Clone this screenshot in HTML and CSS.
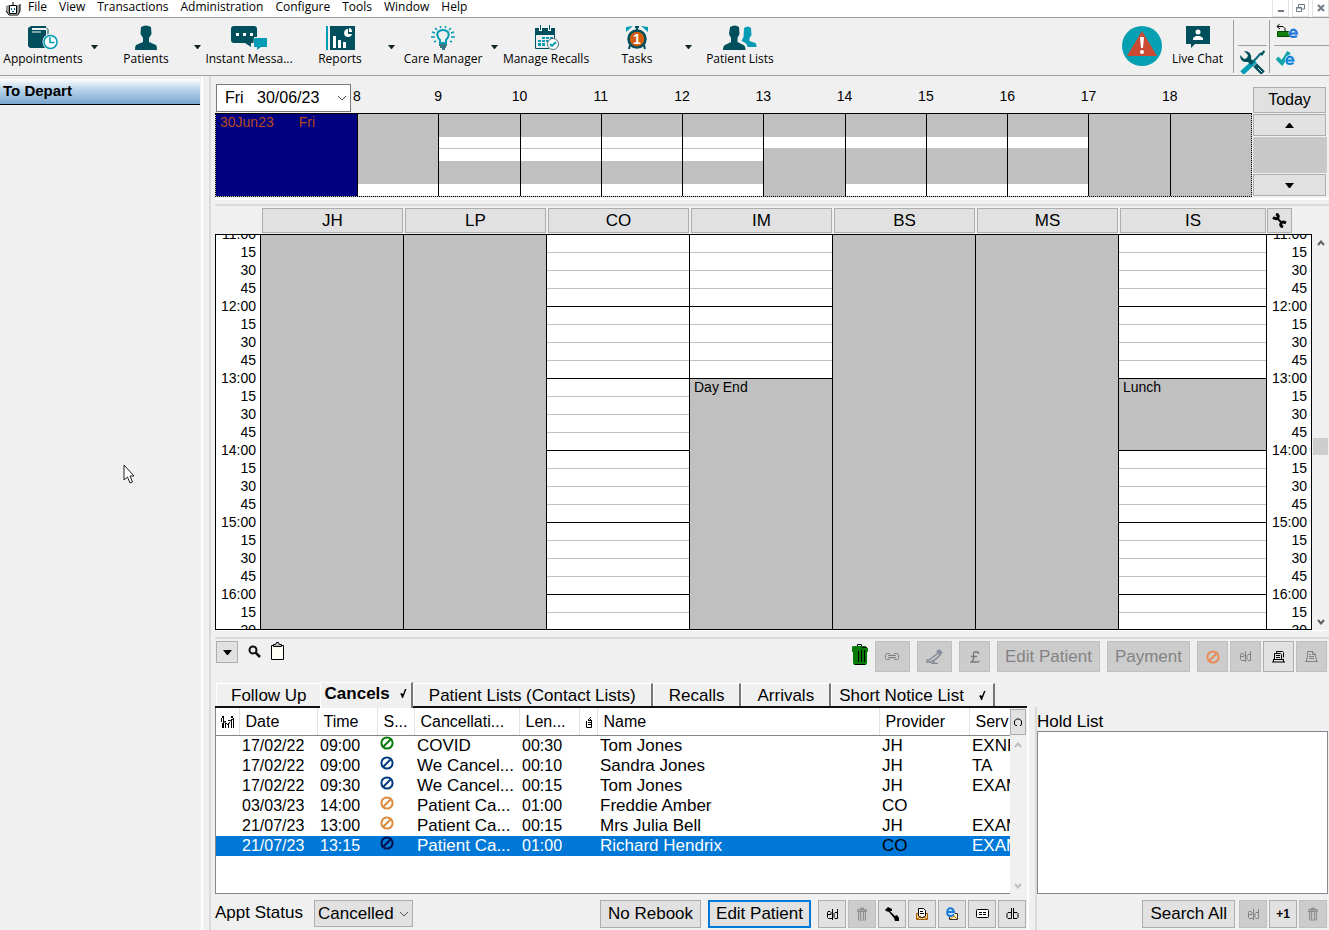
FILE: index.html
```html
<!DOCTYPE html>
<html lang="en">
<head>
    <meta charset="UTF-8">
    <meta name="viewport" content="width=device-width, initial-scale=1.0">
    <title>Appointments</title>
    <link rel="stylesheet" href="styles.css">
</head>
<body>
    <!-- shared icons -->
    <svg class="defs" aria-hidden="true">
        <symbol id="arrow-down" viewBox="0 0 9 5"><path d="M0 0h9L5 5H4z"/></symbol>
        <symbol id="arrow-up" viewBox="0 0 9 5"><path d="M0 5h9L5 0H4z"/></symbol>
        <symbol id="ban" viewBox="0 0 14 14"><g fill="none" stroke="currentColor" stroke-width="2"><circle cx="7" cy="7" r="5.6"/><path d="M3.5 10.5l7-7"/></g></symbol>
        <symbol id="chev-up" viewBox="0 0 8 6"><path d="M1 5l3-3.500 3 3.500" fill="none" stroke="currentColor" stroke-width="2"/></symbol>
        <symbol id="chev-down" viewBox="0 0 8 6"><path d="M1 1l3 3.500 3-3.500" fill="none" stroke="currentColor" stroke-width="2"/></symbol>
        <symbol id="ed" viewBox="0 0 13 13"><path d="M1 6.500h4v-2l-1-1H2l-.500 1v5l1 1H6M6.500 1v11M11.500 1v9.500H9l-1-1v-4l1-1h2.500" fill="none" stroke="currentColor"/></symbol>
        <symbol id="bin" viewBox="0 0 12 14"><path d="M1 3h10v1.500H1zM4 1h4v2H4z" fill="#a8a8a8"/><path d="M2 4h8v9H2z" fill="#c4c4c4"/><path d="M1 4.500h10M2.500 5v8h7V5M4.500 5v7M7.500 5v7M1.500 2.500h9M4.500 2V1h3v1" fill="none" stroke="#8d8d8d"/></symbol>
        <symbol id="print" viewBox="0 0 15 14"><path d="M3.500 8.500v-7h5l3 3v4M8.500 1.500v3h3M5 4.500h2M5 6.500h5M5 8.500h5M3 8.500H2.500v3M12 8.500h.500v3M1 11.500h13" fill="none" stroke="currentColor"/></symbol>
        <symbol id="print-stack" viewBox="0 0 15 14"><path d="M5.500 3V1.500h6l1 1v5M3.500 9V3.500h6l1 1V9M5 5.500h4M5 7.500h4M2 9.500h11M1 12h13M12.500 9v3M2.500 9v3" fill="none" stroke="currentColor"/></symbol>
        <symbol id="tick" viewBox="0 0 8 11"><path d="M7.500 1H6L4 6 2.500 5 1 6l1 1 1 3h1z"/></symbol>
    </svg>

    <header>
        <nav class="menubar">
            <svg class="app-icon" width="16" height="14" viewBox="0 0 16 14"><path d="M1 4l3-1v9l-3-2zM12 3h3v7l-3 2z" fill="#999"/><path d="M1 9l3 4h9l2-4V2M8 0v3" fill="none" stroke="#000"/><path d="M4.500 3.500h7v8h-7z" fill="#fff" stroke="#000"/><path d="M6 6h1v2H6zM9 6h1v2H9zM7 9h2v1H7z" fill="#069"/></svg>
            <a href="#">File</a>
            <a href="#">View</a>
            <a href="#">Transactions</a>
            <a href="#">Administration</a>
            <a href="#">Configure</a>
            <a href="#">Tools</a>
            <a href="#">Window</a>
            <a href="#">Help</a>
            <div class="window-buttons">
                <button aria-label="Minimise"><svg width="8" height="8"><path d="M1 6h6v2H1z" fill="#6e7b87"/></svg></button>
                <button aria-label="Restore"><svg width="9" height="9"><path d="M2.500 3V.5h6V5H6M0 4h6M.5 3.500h5v4h-5z" fill="none" stroke="#6e7b87"/></svg></button>
                <button aria-label="Close"><svg width="8" height="8"><path d="M1 1l6 6M7 1L1 7" stroke="#6e7b87" stroke-width="2"/></svg></button>
            </div>
        </nav>

        <div class="toolbar">
            <button class="tool">
                <svg width="30" height="25" viewBox="0 0 30 25"><path d="M3 1h15v2H4v2h14v18H2L0 21V3z" fill="#004f5c"/><path d="M4 2.500h14l2 2V12" fill="none" stroke="#004f5c"/><path d="M4 7h9" stroke="#fff"/><circle cx="22.500" cy="17" r="8" fill="#f0f0f0"/><circle cx="22.500" cy="17" r="6.500" fill="#fff" stroke="#039cb4" stroke-width="1.500"/><path d="M22 12v5.500h4.500" fill="none" stroke="#039cb4" stroke-width="1.500"/></svg>
                Appointments
            </button>
            <button class="drop" aria-label="Appointments menu"><svg width="7" height="4"><use href="#arrow-down"/></svg></button>
            <button class="tool">
                <svg width="24" height="25" viewBox="0 0 24 25"><path d="M7 2q5-3 10 0l.500 7-2.500 4v4l7 3q1 1 1 5H1q0-4 1-5l7-3v-4L6.500 9z" fill="#004f5c"/></svg>
                Patients
            </button>
            <button class="drop" aria-label="Patients menu"><svg width="7" height="4"><use href="#arrow-down"/></svg></button>
            <button class="tool spaced">
                <svg width="37" height="25" viewBox="0 0 37 25"><path d="M3 1h20q3 0 3 3v11q0 3-3 3h-3v4l-6-4H3q-3 0-3-3V4q0-3 3-3z" fill="#004f5c"/><path d="M5 8h3v3H5zM12 8h3v3h-3zM19 8h3v3h-3z" fill="#fff"/><path d="M23 12h13v11H22z" fill="#f0f0f0"/><path d="M24 13h12v9h-6l-4 3v-3h-3v-8z" fill="#039cb4"/></svg>
                Instant Messa...
            </button>
            <button class="tool">
                <svg width="29" height="25" viewBox="0 0 29 25"><path d="M0 1h2v24H0z" fill="#039cb4"/><path d="M4 1h25v24H4z" fill="#004f5c"/><path d="M7 11h3v12H7zM12 15h3v8h-3zM17 17h3v6h-3zM22 4a4 4 0 1 0 4 5h-4z" fill="#fff"/><path d="M23 3q3 0 3 4h-3z" fill="#fff"/></svg>
                Reports
            </button>
            <button class="drop" aria-label="Reports menu"><svg width="7" height="4"><use href="#arrow-down"/></svg></button>
            <button class="tool">
                <svg width="24" height="25" viewBox="0 0 24 25"><path d="M9 18v-3q-4-4-2-8 2-2 5-2t5 2q2 4-2 8v3z" fill="none" stroke="#039cb4" stroke-width="2"/><path d="M8 20h8M9 22h6M11 24h3" stroke="#004f5c" stroke-width="1.500"/><path d="M9 1l1 2M15 1l-1 2M4 3l2 2M20 3l-2 2M1 7l3 1M23 7l-3 1M0 12h4M24 12h-4M3 17l2-1M21 17l-2-1" stroke="#039cb4" stroke-width="1.500"/></svg>
                Care Manager
            </button>
            <button class="drop" aria-label="Care Manager menu"><svg width="7" height="4"><use href="#arrow-down"/></svg></button>
            <button class="tool spaced">
                <svg width="25" height="25" viewBox="0 0 25 25"><path d="M1 3h20v7H1z" fill="#004f5c"/><path d="M1.500 9v14.500H15M20.500 9v5" fill="none" stroke="#004f5c"/><path d="M5 1h3v5H5zM14 1h3v5h-3z" fill="#fff"/><path d="M6 0h1v5H6zM15 0h1v5h-1z" fill="#004f5c"/><path d="M8 12h3v2H8zM12 12h3v2h-3zM16 12h3v2h-3zM4 15h3v2H4zM8 15h3v2H8zM12 15h3v2h-3zM4 18h3v3H4zM8 18h3v3H8z" fill="#039cb4"/><circle cx="19" cy="19" r="5.500" fill="#fff" stroke="#53717a"/><path d="M16 19l2 2 4-4" fill="none" stroke="#039cb4" stroke-width="1.800"/></svg>
                Manage Recalls
            </button>
            <button class="tool">
                <svg width="24" height="25" viewBox="0 0 24 25"><path d="M1 7V2l7-1zM23 7V2l-7-1z" fill="#039cb4"/><path d="M5 20l-1 4M19 20l1 4M12 2v3M10 2h4" stroke="#004f5c" stroke-width="2"/><circle cx="12" cy="14" r="8.500" fill="#d25c0b" stroke="#004f5c" stroke-width="2.500"/><text class="badge-num" x="8" y="19">1</text></svg>
                Tasks
            </button>
            <button class="drop" aria-label="Tasks menu"><svg width="7" height="4"><use href="#arrow-down"/></svg></button>
            <button class="tool">
                <svg width="34" height="25" viewBox="0 0 34 25"><path d="M21 3q4-3 7 0l.500 7-2 3v3l6 2q1 1 1 4h-9q0-4-6-6l2-4z" fill="#039cb4"/><path d="M7 2q5-3 9 0l.500 7-2 4v4l6 3q2 1 2 5H0q0-4 2-5l6-3v-4L6 9z" fill="#004f5c"/></svg>
                Patient Lists
            </button>

            <div class="toolbar-right">
                <button class="alert" aria-label="Alerts">
                    <svg width="40" height="40" viewBox="0 0 40 40"><circle cx="20" cy="20" r="20" fill="#079fb2"/><path d="M20 5l15 25H5z" fill="#cc4a34"/><path d="M18 11h4l-1 11h-2z" fill="#fff"/><circle cx="20" cy="26" r="2" fill="#fff"/></svg>
                </button>
                <button class="tool chat">
                    <svg width="24" height="25" viewBox="0 0 24 25"><path d="M0 1h24v18H9l-4 4v-4H0z" fill="#004f5c"/><circle cx="12" cy="7" r="2.500" fill="#fff"/><path d="M7 15v-2l3-2h4l3 2v2z" fill="#fff"/></svg>
                    Live Chat
                </button>
                <div class="quick tools-col">
                    <span></span>
                    <button aria-label="Tools"><svg width="25" height="24" viewBox="0 0 25 24"><path d="M2 23L15 11" stroke="#039cb4" stroke-width="5"/><path d="M4 1l4 4-1 3-3 1-4-4q0 8 8 7l3 3 3-3-3-3Q12 1 4 1z" fill="#004f5c"/><path d="M13 12l8-9" stroke="#0a6c7b" stroke-width="2"/><path d="M20 4l4-4 1 2-3 4z" fill="#004f5c"/><path d="M15 15l8 8" stroke="#004f5c" stroke-width="5"/><path d="M18 18l4 4" stroke="#d5e5e8" stroke-width="1"/></svg></button>
                </div>
                <div class="quick links-col">
                    <button aria-label="Send"><svg width="23" height="15" viewBox="0 0 23 15"><path d="M3.500 0L1 2.500l3 2.500M1 2.500h6l2 2V7" fill="none" stroke="#000"/><path d="M1.500 7.500h12v5h-12z" fill="#13800f" stroke="#034b00"/><circle cx="17.500" cy="9" r="5" fill="#cfe6fb"/><path d="M21 12q-4 2-6.500 0-1.500-4 1.500-6 4-1 5 3.500h-6" fill="none" stroke="#2474cf" stroke-width="2"/></svg></button>
                    <button aria-label="Confirm"><svg width="20" height="15" viewBox="0 0 20 15"><path d="M1 7l5 5 7-11" fill="none" stroke="#12a6a6" stroke-width="4"/><circle cx="14" cy="9" r="5" fill="#cfe6fb"/><path d="M17.500 12q-4 2-6.500 0-1.500-4 1.500-6 4-1 5 3.500h-6" fill="none" stroke="#0e82d6" stroke-width="2"/></svg></button>
                </div>
            </div>
        </div>
    </header>

    <div class="workspace">
        <aside>
            <h2>To Depart</h2>
            <svg class="pointer" width="12" height="20" viewBox="0 0 12 20"><path d="M1 1v15l3.500-3 2.500 6 2.500-1L7 12h4z" fill="#fff" stroke="#222"/></svg>
        </aside>

        <main>
            <!-- day overview -->
            <section class="overview">
                <div class="overview-head">
                    <select class="date" aria-label="Date"><option>Fri&nbsp;&nbsp; 30/06/23</option></select>
                    <div class="hours">
                        <span>8</span><span>9</span><span>10</span><span>11</span><span>12</span><span>13</span><span>14</span><span>15</span><span>16</span><span>17</span><span>18</span>
                    </div>
                </div>
                <button class="today">Today</button>
                <div class="strip">
                    <div class="strip-day"><span>30Jun23</span><span>Fri</span></div>
                    <div class="strip-grid">
                        <i class="open co"></i>
                        <i class="open im"></i>
                        <i class="open is-am"></i>
                        <i class="open is-pm"></i>
                        <div class="hour-lines"><i></i><i></i><i></i><i></i><i></i><i></i><i></i><i></i><i></i><i></i><i></i></div>
                    </div>
                </div>
                <div class="day-scroll">
                    <button aria-label="Previous day"><svg width="9" height="5"><use href="#arrow-up"/></svg></button>
                    <span></span>
                    <button aria-label="Next day"><svg width="9" height="5"><use href="#arrow-down"/></svg></button>
                </div>
            </section>

            <!-- appointment book -->
            <section class="book">
                <div class="providers">
                    <div class="provider-grid">
                        <button>JH</button>
                        <button>LP</button>
                        <button>CO</button>
                        <button>IM</button>
                        <button>BS</button>
                        <button>MS</button>
                        <button>IS</button>
                    </div>
                    <button class="settings" aria-label="Settings"><svg width="15" height="15" viewBox="0 0 15 15"><g fill="none" stroke="#000"><path d="M4 1q3 1 2 3.500T1 4.500M11 14q-3-1-2-3.500t5-.500" stroke-width="3"/><path d="M5 5l5 5" stroke-width="2"/></g></svg></button>
                </div>
                <div class="book-body">
                    <div class="book-frame">
                        <ul class="times">
                            <li>11:00</li><li>15</li><li>30</li><li>45</li>
                            <li>12:00</li><li>15</li><li>30</li><li>45</li>
                            <li>13:00</li><li>15</li><li>30</li><li>45</li>
                            <li>14:00</li><li>15</li><li>30</li><li>45</li>
                            <li>15:00</li><li>15</li><li>30</li><li>45</li>
                            <li>16:00</li><li>15</li><li>30</li>
                        </ul>
                        <div class="columns">
                            <div class="col closed"></div>
                            <div class="col closed"></div>
                            <div class="col"></div>
                            <div class="col"><div class="block day-end">Day End</div></div>
                            <div class="col closed"></div>
                            <div class="col closed"></div>
                            <div class="col"><div class="block lunch">Lunch</div></div>
                        </div>
                        <ul class="times">
                            <li>11:00</li><li>15</li><li>30</li><li>45</li>
                            <li>12:00</li><li>15</li><li>30</li><li>45</li>
                            <li>13:00</li><li>15</li><li>30</li><li>45</li>
                            <li>14:00</li><li>15</li><li>30</li><li>45</li>
                            <li>15:00</li><li>15</li><li>30</li><li>45</li>
                            <li>16:00</li><li>15</li><li>30</li>
                        </ul>
                    </div>
                    <div class="scrollbar">
                        <svg width="8" height="6"><use href="#chev-up"/></svg>
                        <i class="thumb"></i>
                        <svg width="8" height="6"><use href="#chev-down"/></svg>
                    </div>
                </div>
            </section>

            <!-- actions -->
            <section class="actions">
                <button class="btn small" aria-label="Options"><svg width="9" height="5"><use href="#arrow-down"/></svg></button>
                <button class="plain" aria-label="Search"><svg width="13" height="13" viewBox="0 0 13 13"><circle cx="5" cy="5" r="3.500" fill="none" stroke="#111" stroke-width="2"/><path d="M7.500 7.500L12 12" stroke="#111" stroke-width="2.500"/></svg></button>
                <button class="plain" aria-label="Clipboard"><svg width="13" height="18" viewBox="0 0 13 18"><path d="M.5 3.500h12v14H.5z" fill="#fffef2" stroke="#000"/><path d="M2.500 4.500v-2h2l1-2h2l1 2h2v2z" fill="#bbb" stroke="#000"/></svg></button>
                <div class="actions-right">
                    <button class="plain" aria-label="Bin"><svg width="16" height="22" viewBox="0 0 16 22"><path d="M5.500 2V.5h4V2" fill="none" stroke="#000"/><path d="M0 3q0-1 2-1h12v2h2v4h-1v11l-1 2H2l-1-2V8H0z" fill="#087a08"/><path d="M6.500 7v11M9.500 6v12M12.500 6v12M3 20.500h10M10 3.500h5" stroke="#000"/></svg></button>
                    <button class="btn mid" disabled aria-label="Link"><svg width="14" height="8" viewBox="0 0 14 8"><path d="M5.500 3V1.500l-1-1h-3l-1 1v4l1 1h3l1-1V5M3 2.500h8M3 4.500h8M8.500 3V1.500l1-1h3l1 1v4l-1 1h-3l-1-1V5" fill="none" stroke="#808080"/></svg></button>
                    <button class="btn mid" disabled aria-label="Chair"><svg width="18" height="15" viewBox="0 0 18 15"><circle cx="14" cy="3" r="2.500" fill="#888f9b"/><path d="M1 11h3l8-6M1 13h5l5-3 4-4 2-3M9 11v3M6 14.500h7" fill="none" stroke="#858b96" stroke-width="1.500"/></svg></button>
                    <button class="btn pound" disabled aria-label="Charge"><svg width="11" height="12" viewBox="0 0 11 12"><path d="M9.500 3V2l-1-1h-3l-1 1v6l-1 2-2 1h7l2-1M2 5.500h6" fill="none" stroke="#777" stroke-width="1.300"/></svg></button>
                    <button class="btn" disabled>Edit Patient</button>
                    <button class="btn" disabled>Payment</button>
                    <div class="group">
                        <button class="btn" disabled aria-label="Cancel"><svg class="orange" width="14" height="14"><use href="#ban"/></svg></button>
                        <button class="btn" disabled aria-label="Edit"><svg width="13" height="13"><use href="#ed"/></svg></button>
                        <button class="btn" aria-label="Print"><svg width="15" height="14"><use href="#print-stack"/></svg></button>
                        <button class="btn" disabled aria-label="Preview"><svg width="15" height="14"><use href="#print"/></svg></button>
                    </div>
                </div>
            </section>

            <section class="lower">
                <div class="lists">
                    <div class="tabs">
                        <button class="tab">Follow Up</button>
                        <button class="tab active">Cancels <svg width="8" height="11"><use href="#tick"/></svg></button>
                        <button class="tab">Patient Lists (Contact Lists)</button>
                        <button class="tab">Recalls</button>
                        <button class="tab">Arrivals</button>
                        <button class="tab ticked">Short Notice List <svg width="8" height="11"><use href="#tick"/></svg></button>
                    </div>
                    <div class="list">
                        <div class="list-scroll">
                            <table>
                                <colgroup>
                                    <col class="c-fam"><col class="c-date"><col class="c-time"><col class="c-status"><col class="c-reason"><col class="c-len"><col class="c-note"><col><col class="c-prov"><col class="c-serv">
                                </colgroup>
                                <thead>
                                    <tr>
                                        <th><svg width="13" height="13" viewBox="0 0 13 13"><path d="M1 1h2v2H1zM10 1h2v2h-2zM4 6h1v1H4zM7 5h2v1H7z"/><path d="M.5 3v4M2.500 3v10M1.500 8v5M4.500 8v5M5 8l2 2 2-3M7.500 8v5M10.500 4v9M12.500 3v10M3 6l2 3M9 6l3-2" fill="none" stroke="#000"/></svg></th>
                                        <th>Date</th>
                                        <th>Time</th>
                                        <th>S...</th>
                                        <th>Cancellati...</th>
                                        <th>Len...</th>
                                        <th><svg width="8" height="12" viewBox="0 0 8 12"><path d="M1.500 5v6.500h5V4M3 4.500h3M6 1L3 4M6 3L4 5M3 6.500h3M3 8.500h3" fill="none" stroke="#000"/></svg></th>
                                        <th>Name</th>
                                        <th>Provider</th>
                                        <th>Serv</th>
                                    </tr>
                                </thead>
                                <tbody>
                                    <tr><td></td><td class="num">17/02/22</td><td class="num">09:00</td><td><svg class="green" width="14" height="14"><use href="#ban"/></svg></td><td>COVID</td><td class="num">00:30</td><td></td><td>Tom Jones</td><td>JH</td><td>EXNP</td></tr>
                                    <tr><td></td><td class="num">17/02/22</td><td class="num">09:00</td><td><svg class="blue" width="14" height="14"><use href="#ban"/></svg></td><td>We Cancel...</td><td class="num">00:10</td><td></td><td>Sandra Jones</td><td>JH</td><td>TA</td></tr>
                                    <tr><td></td><td class="num">17/02/22</td><td class="num">09:30</td><td><svg class="blue" width="14" height="14"><use href="#ban"/></svg></td><td>We Cancel...</td><td class="num">00:15</td><td></td><td>Tom Jones</td><td>JH</td><td>EXAM</td></tr>
                                    <tr><td></td><td class="num">03/03/23</td><td class="num">14:00</td><td><svg class="amber" width="14" height="14"><use href="#ban"/></svg></td><td>Patient Ca...</td><td class="num">01:00</td><td></td><td>Freddie Amber</td><td>CO</td><td></td></tr>
                                    <tr><td></td><td class="num">21/07/23</td><td class="num">13:00</td><td><svg class="amber" width="14" height="14"><use href="#ban"/></svg></td><td>Patient Ca...</td><td class="num">00:15</td><td></td><td>Mrs Julia Bell</td><td>JH</td><td>EXAM</td></tr>
                                    <tr class="selected"><td></td><td class="num">21/07/23</td><td class="num">13:15</td><td><svg class="navy" width="14" height="14"><use href="#ban"/></svg></td><td>Patient Ca...</td><td class="num">01:00</td><td></td><td>Richard Hendrix</td><td class="dark">CO</td><td>EXAM</td></tr>
                                </tbody>
                            </table>
                        </div>
                        <div class="list-side">
                            <button class="reset" aria-label="Reset"><svg width="9" height="8" viewBox="0 0 9 8"><path d="M3 7.500H1.500L.5 6V3l2-2h3l2 2v3l-.500 1.500H6" fill="none" stroke="#000"/></svg></button>
                            <div class="scrollbar faint">
                                <svg width="8" height="6"><use href="#chev-up"/></svg>
                                <svg width="8" height="6"><use href="#chev-down"/></svg>
                            </div>
                        </div>
                    </div>
                    <div class="footer">
                        <label for="status">Appt Status</label>
                        <select id="status" class="status"><option>Cancelled</option></select>
                        <div class="footer-right">
                            <button class="btn">No Rebook</button>
                            <button class="btn primary">Edit Patient</button>
                            <div class="group">
                                <button class="btn" aria-label="Edit"><svg width="13" height="13"><use href="#ed"/></svg></button>
                                <button class="btn" disabled aria-label="Delete"><svg width="12" height="14"><use href="#bin"/></svg></button>
                                <button class="btn" aria-label="Phone"><svg width="14" height="14" viewBox="0 0 14 14"><path d="M0 3l3-3 4 2v2H5l5 5 2-1 2 3v3h-4l-1-3-5-6-3-1z"/></svg></button>
                                <button class="btn" aria-label="Letter"><svg width="14" height="14" viewBox="0 0 14 14"><path d="M1.500 6.500h11v6h-11z" fill="#ffd68a" stroke="#a35a00"/><path d="M3.500 9V1.500h5l2 2V9L7 11z" fill="#fff" stroke="#000"/><path d="M5 4.500h3M5 6.500h4" stroke="#000"/><path d="M2 12l4-3M12 12L8 9" stroke="#a35a00"/></svg></button>
                                <button class="btn" aria-label="Email"><svg width="14" height="14" viewBox="0 0 14 14"><path d="M4.500 6.500h8v6h-8z" fill="#ffefbd" stroke="#333"/><path d="M5 12l4-3 3 3" fill="none" stroke="#c47a00"/><circle cx="5.500" cy="5" r="4.500" fill="#cfe6fb"/><path d="M9 7.500q-4 3-6.500 0-1-4 1.500-6 4-1 5 3.500H3" fill="none" stroke="#1a7ad8" stroke-width="2"/></svg></button>
                                <button class="btn" aria-label="SMS"><svg width="13" height="10" viewBox="0 0 13 10"><rect x=".5" y=".5" width="12" height="8" rx="1" fill="#fff" stroke="#000"/><path d="M3 3.500h3M7 3.500h3M3 5.500h3M7 5.500h3" stroke="#000"/></svg></button>
                                <button class="btn" aria-label="Database"><svg width="13" height="12" viewBox="0 0 13 12"><path d="M5.500 0v10.500H2l-1-1v-4l1-1h3.500M7.500 0v10.500H11l1-1v-4l-1-1H7.500" fill="none" stroke="#000"/></svg></button>
                            </div>
                        </div>
                    </div>
                </div>

                <div class="side">
                    <div class="hold">
                        <h3>Hold List</h3>
                        <div class="hold-box"></div>
                        <div class="footer hold-footer">
                            <button class="btn">Search All</button>
                            <div class="group">
                                <button class="btn" disabled aria-label="Edit"><svg width="13" height="13"><use href="#ed"/></svg></button>
                                <button class="btn plus">+1</button>
                                <button class="btn" disabled aria-label="Delete"><svg width="12" height="14"><use href="#bin"/></svg></button>
                            </div>
                        </div>
                    </div>
                </div>
            </section>
        </main>
    </div>
</body>
</html>
```
FILE: styles.css
```css
* {
    box-sizing: border-box;
}
body {
    margin: 0;
    height: 100vh;
    display: flex;
    flex-direction: column;
    overflow: hidden;
    background: #f0f0f0;
    color: #000;
    font: 16px/20px "Liberation Sans", Arial, sans-serif;
}
button, select {
    font: inherit;
    color: inherit;
    padding: 0;
    margin: 0;
    border-radius: 0;
}
ul {
    list-style: none;
    margin: 0;
    padding: 0;
}
svg {
    display: block;
    flex: none;
}
.defs {
    position: absolute;
    width: 0;
    height: 0;
}

/* menu bar */
.menubar {
    display: flex;
    align-items: center;
    gap: 12px;
    height: 17px;
    padding-left: 5px;
    background: #fff;
    font: 12px/14px "Open Sans", "Noto Sans", sans-serif;
}
.menubar a {
    color: #000;
    text-decoration: none;
    padding-bottom: 3px;
}
.app-icon {
    margin-right: -5px;
}
.window-buttons {
    display: flex;
    gap: 3px;
    margin-left: auto;
}
.window-buttons button {
    display: grid;
    place-items: center;
    width: 17px;
    height: 17px;
    background: #fff;
    border: 1px solid #e3e3e3;
    border-top: 0;
}

/* toolbar */
.toolbar {
    display: flex;
    height: 59px;
    border-top: 1px solid #a0a0a0;
    border-bottom: 1px solid #a0a0a0;
    font: 12px/18px "Open Sans", "Noto Sans", sans-serif;
}
.toolbar button {
    background: none;
    border: 0;
}
.toolbar .tool {
    display: flex;
    flex-direction: column;
    align-items: center;
    width: 86px;
    padding-top: 7px;
    white-space: nowrap;
}
.toolbar .spaced {
    margin-right: 5px;
}
.drop {
    display: grid;
    place-items: center;
    width: 17px;
    fill: #16261c;
}
.badge-num {
    font: bold 14px "Liberation Sans", Arial, sans-serif;
    fill: #fff;
}
.toolbar-right {
    display: flex;
    margin-left: auto;
}
.toolbar .chat {
    width: 71px;
}
.toolbar .alert {
    display: grid;
    align-items: start;
    padding-top: 8px;
}
.quick {
    display: grid;
    grid-template-rows: 26px 26px;
    margin: 2px 0;
    border-left: 1px solid #a0a0a0;
    padding-left: 4px;
}
.quick > * {
    display: grid;
    align-items: center;
}
.toolbar .quick > :first-child {
    border-bottom: 1px solid #a0a0a0;
}
.tools-col {
    width: 36px;
    padding-right: 2px;
}
.toolbar .tools-col button {
    padding: 4px 0 0 2px;
}
.links-col {
    width: 60px;
}
.toolbar .links-col button {
    padding: 0 0 2px 2px;
}

/* workspace */
.workspace {
    flex: 1;
    min-height: 0;
    display: flex;
}
aside {
    position: relative;
    width: 203px;
    padding: 3px 1px 0 0;
    border-right: 2px solid #fff;
}
aside h2 {
    margin: 0;
    height: 26px;
    padding-left: 3px;
    font-size: 15px;
    line-height: 24px;
    background: linear-gradient(#fff, #c3d9ee 35%, #9fc3e0 65%, #7ba5d0);
    border-bottom: 1px solid #000;
}
.pointer {
    position: absolute;
    left: 123px;
    top: 388px;
}
main {
    flex: 1;
    min-width: 0;
    display: flex;
    flex-direction: column;
    margin-left: 6px;
    border-left: 2px solid #dadada;
    padding-left: 4px;
}

/* day overview */
.overview {
    display: grid;
    grid-template-columns: 1fr 77px;
    grid-template-rows: 37px 84px;
    padding-bottom: 1px;
    border-bottom: 2px solid #fff;
}
.overview-head {
    display: flex;
    padding: 8px 1px 1px 1px;
}
.date {
    width: 135px;
    padding-left: 8px;
    border: 1px solid #7a7a7a;
    appearance: none;
    background: #fff url("data:image/svg+xml,%3Csvg xmlns='http://www.w3.org/2000/svg' width='10' height='6'%3E%3Cpath d='M1 1l4 4 4-4' fill='none' stroke='%23444'/%3E%3C/svg%3E") no-repeat right 3px center;
}
.hours {
    flex: 1;
    display: grid;
    grid-template-columns: repeat(11, 1fr);
    margin-left: 6px;
    font-size: 14px;
    line-height: 24px;
}
.hours span {
    width: 20px;
    margin-left: -10px;
    text-align: center;
}
.today, .day-scroll button, .providers button, .reset {
    background: #e1e1e1;
    border: 1px solid #adadad;
}
.today {
    margin: 11px 3px 0 1px;
}
.strip {
    display: flex;
    border: 1px dotted #000;
    border-top-style: solid;
    background: #c0c0c0;
}
.strip-day {
    width: 141px;
    display: flex;
    gap: 25px;
    padding-left: 4px;
    background: #000080;
    color: #b5481c;
    font-size: 14px;
    line-height: 17px;
}
.strip-grid {
    flex: 1;
    display: grid;
    grid-template-columns: repeat(11, 1fr);
    grid-template-rows: repeat(7, 1fr);
}
.open {
    background: #fff;
}
.co { grid-area: 3 / 2 / 4 / 10; border-bottom: 1px solid #c0c0c0; }
.im { grid-area: 4 / 2 / 5 / 6; }
.is-am { grid-area: 7 / 1 / 8 / 6; }
.is-pm { grid-area: 7 / 7 / 8 / 10; }
.hour-lines {
    grid-area: 1 / 1 / 8 / 12;
    display: grid;
    grid-template-columns: subgrid;
}
.hour-lines i {
    border-left: 1px solid #000;
}
.day-scroll {
    display: grid;
    grid-template-rows: 22px 1fr 22px;
    gap: 1px;
    padding: 1px 0 1px 1px;
}
.day-scroll span {
    background: #c8c8c8;
    margin-right: 2px;
}
.day-scroll button {
    display: grid;
    place-items: center;
    margin-right: 3px;
}

/* appointment book */
.book {
    flex: 1;
    min-height: 0;
    display: flex;
    flex-direction: column;
    margin-top: 4px;
    border-top: 2px solid #dadada;
    border-bottom: 1px solid #fff;
}
.providers {
    display: flex;
    height: 28px;
    padding: 2px 37px 1px 46px;
    font-size: 17px;
}
.provider-grid, .columns {
    flex: 1;
    display: grid;
    grid-template-columns: repeat(6, 143fr) 148fr;
}
.provider-grid button {
    margin: 0 1px;
}
.providers .settings {
    display: grid;
    place-items: center;
    width: 25px;
}
.book-body {
    flex: 1;
    min-height: 0;
    display: flex;
}
.book-frame {
    flex: 1;
    display: flex;
    border: 1px solid #000;
    background: #fff;
    overflow: hidden;
    font-size: 14px;
    line-height: 18px;
}
.times {
    width: 44px;
    margin-top: -10px;
    padding-right: 4px;
    text-align: right;
    height: 0;
}
.times li {
    height: 18px;
}
.columns {
    border-right: 1px solid #000;
}
.col {
    border-left: 1px solid #000;
    background:
        repeating-linear-gradient(transparent 0 71px, #000 71px 72px),
        repeating-linear-gradient(transparent 0 17px, #c0c0c0 17px 18px);
}
.closed {
    background: #c0c0c0;
}
.block {
    margin-top: 144px;
    padding-left: 4px;
    background: #c0c0c0;
    line-height: 16px;
}
.day-end {
    height: calc(100% - 144px);
}
.lunch {
    height: 72px;
    border-bottom: 1px solid #000;
}
.scrollbar {
    width: 17px;
    display: flex;
    flex-direction: column;
    justify-content: space-between;
    align-items: center;
    padding: 6px 0 5px;
    color: #606060;
}
.thumb {
    width: 15px;
    height: 17px;
    margin-top: 28px;
    background: #cdcdcd;
}

/* actions */
.btn {
    display: grid;
    place-items: center;
    padding: 0 8px;
    background: #e1e1e1;
    border: 1px solid #adadad;
    font-size: 17px;
    white-space: nowrap;
}
.btn:disabled {
    background: #ccc;
    border-color: #bfbfbf;
    color: #838383;
}
.plain {
    border: 0;
    background: none;
}
.group {
    display: flex;
    gap: 2px;
}
.group .btn {
    width: 31px;
    padding: 0;
}
.actions {
    display: flex;
    align-items: flex-start;
    gap: 10px;
    margin-top: 6px;
    padding: 2px 2px 0 1px;
    height: 46px;
    border-top: 2px solid #dadada;
}
.actions .small {
    width: 22px;
    height: 22px;
    padding: 0;
}
.actions .plain {
    height: 20px;
    display: grid;
    place-items: center;
}
.actions-right {
    display: flex;
    gap: 7px;
    margin-left: auto;
}
.actions-right .btn {
    height: 31px;
    padding: 0 7px;
}
.actions .actions-right .plain {
    height: 28px;
}
.mid {
    width: 35px;
}
.pound {
    width: 31px;
}
.orange { color: #ea8a55; }
.green { color: #087a08; }
.blue { color: #003a80; }
.amber { color: #dc8a3c; }
.navy { color: #00104a; }

/* lists */
.lower {
    display: flex;
    height: 247px;
}
.lists {
    flex: 1;
    min-width: 0;
    display: flex;
    flex-direction: column;
}
.tabs {
    display: flex;
    align-items: flex-end;
    height: 25px;
    border-bottom: 2px solid #111;
    padding-left: 1px;
}
.tab {
    display: flex;
    align-items: center;
    height: 23px;
    padding: 1px 15px 0;
    background: #f0f0f0;
    border: 0;
    border-top: 1px solid #fff;
    border-left: 1px solid #fff;
    border-right: 2px solid #777;
    font-size: 17px;
    white-space: nowrap;
}
.tab:first-child {
    padding: 1px 13px 0 14px;
    border-right: 0;
}
.tab.active {
    height: 26px;
    margin-bottom: -2px;
    padding: 0 4px 4px;
    gap: 9px;
    font-weight: bold;
}
.tab.ticked {
    gap: 14px;
    padding: 1px 7px 0;
}
.list {
    flex: 1;
    display: flex;
    min-height: 0;
    margin-right: 1px;
}
.list-scroll {
    flex: 1;
    overflow: hidden;
    background: #fff;
    border-left: 1px solid #828790;
    border-bottom: 1px solid #828790;
}
table {
    width: 100%;
    table-layout: fixed;
    border-collapse: collapse;
    font-size: 17px;
}
.c-fam { width: 23px; }
.c-date { width: 78px; }
.c-time { width: 60px; }
.c-status { width: 37px; }
.c-reason { width: 105px; }
.c-len { width: 60px; }
.c-note { width: 18px; }
.c-prov { width: 90px; }
.c-serv { width: 41px; }
th {
    height: 27px;
    padding: 1px 0 0 6px;
    text-align: left;
    font-size: 16px;
    font-weight: normal;
    border-right: 1px solid #e2e2e2;
    border-bottom: 1px solid #828790;
    overflow: hidden;
    white-space: nowrap;
}
th:first-child, th:nth-child(7) {
    padding-left: 5px;
}
th:last-child {
    border-right: 0;
}
td {
    height: 20px;
    padding: 0 0 0 3px;
    overflow: hidden;
    white-space: nowrap;
}
td svg {
    margin-bottom: 5px;
}
td.num {
    font-size: 16px;
}
.selected {
    background: #0078d7;
    color: #fff;
}
.selected .dark {
    color: #000;
}
.list-side {
    width: 16px;
    display: flex;
    flex-direction: column;
}
.reset {
    display: grid;
    place-items: center;
    height: 26px;
    margin: 1px 0;
}
.faint {
    flex: 1;
    width: 16px;
    color: #bfbfbf;
}
.footer {
    display: flex;
    height: 36px;
    padding: 6px 1px 2px 0;
    font-size: 17px;
}
.footer label {
    line-height: 26px;
    width: 99px;
}
.status {
    width: 99px;
    height: 27px;
    padding-left: 3px;
    border: 1px solid #adadad;
    appearance: none;
    background: #e1e1e1 url("data:image/svg+xml,%3Csvg xmlns='http://www.w3.org/2000/svg' width='10' height='6'%3E%3Cpath d='M1 1l4 4 4-4' fill='none' stroke='%23555'/%3E%3C/svg%3E") no-repeat right 3px center;
}
.footer-right {
    display: flex;
    gap: 7px;
    margin-left: auto;
}
.footer .btn {
    padding: 0 7px;
}
.footer .group .btn {
    width: 28px;
    padding: 0;
}
.footer .primary {
    padding: 0 6px;
    border: 2px solid #0078d7;
}
.footer .btn.plus {
    font: bold 12px "Liberation Sans", Arial, sans-serif;
}

/* hold list */
.side {
    width: 302px;
    display: flex;
    margin-top: 24px;
    border-left: 2px solid #fff;
    padding-left: 6px;
}
.hold {
    flex: 1;
    display: flex;
    flex-direction: column;
    border-left: 2px solid #dadada;
}
.hold h3 {
    margin: 0;
    padding-top: 5px;
    height: 24px;
    font-size: 17px;
    font-weight: normal;
    line-height: 20px;
}
.hold-box {
    flex: 1;
    margin-right: 1px;
    border: 1px solid #828790;
    background: #fff;
}
.hold-footer {
    justify-content: flex-end;
    gap: 4px;
    padding-right: 2px;
}
```
